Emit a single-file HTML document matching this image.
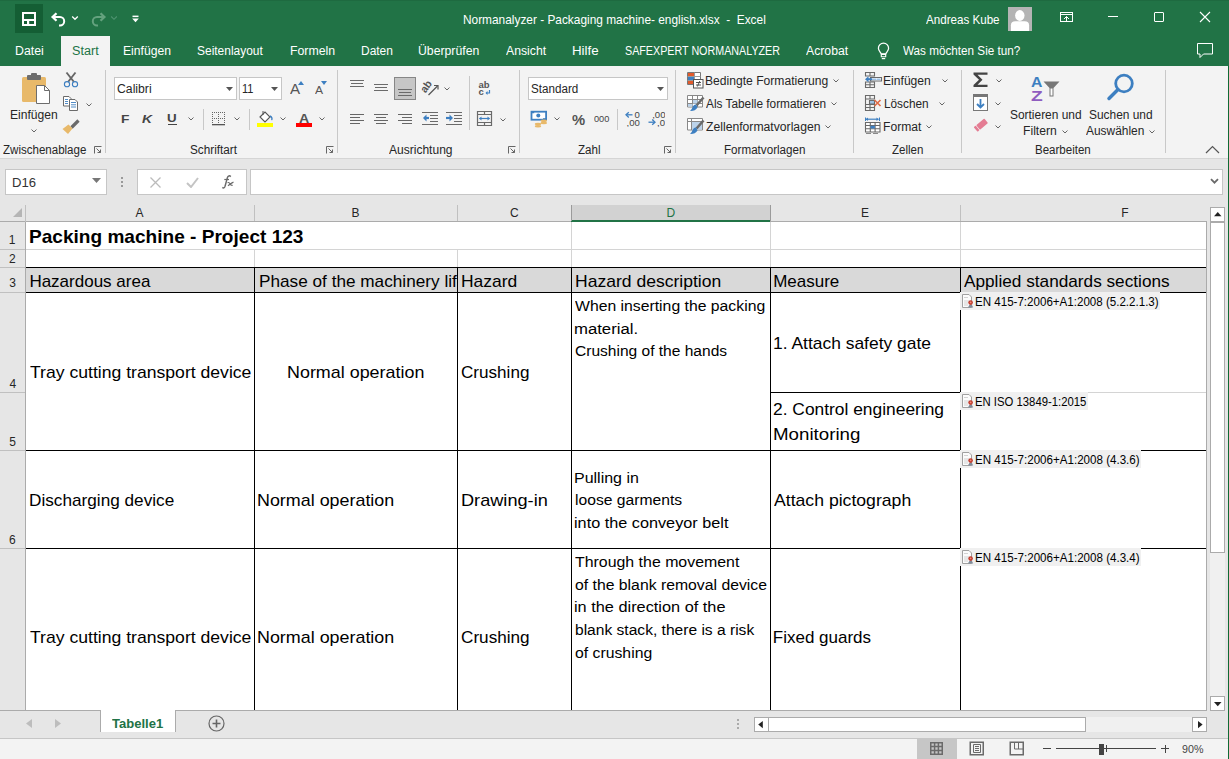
<!DOCTYPE html>
<html><head><meta charset="utf-8">
<style>
*{margin:0;padding:0;box-sizing:border-box}
html,body{width:1229px;height:759px;overflow:hidden;background:#fff;font-family:"Liberation Sans",sans-serif}
.r{position:absolute;display:block}
.t{position:absolute;white-space:nowrap;transform-origin:0 0}
</style></head><body>
<div class="r" style="left:0px;top:0px;width:1229px;height:66px;background:#217346;"></div>
<div class="r" style="left:15px;top:4px;width:28px;height:29px;background:#145e34;"></div>
<svg class="r" style="left:20px;top:10px" width="18" height="18" viewBox="0 0 18 18"><path d="M3 3h12v12H3z" fill="none" stroke="#fff" stroke-width="2"/><rect x="4" y="9" width="10" height="2" fill="#fff"/><rect x="7" y="11" width="2.2" height="3.5" fill="#fff"/></svg>
<svg class="r" style="left:50px;top:10.5px" width="18" height="17" viewBox="0 0 18 17"><path d="M3 6H10A4.2 4.2 0 0 1 10 14.4H9" fill="none" stroke="#fff" stroke-width="2"/><path d="M6.5 2.2L2.6 6l3.9 3.8" fill="none" stroke="#fff" stroke-width="2.3"/></svg>
<svg class="r" style="left:71px;top:15px" width="8" height="6" viewBox="0 0 8 6"><path d="M1.2 1.5L4 4.3 6.8 1.5" fill="none" stroke="#fff" stroke-width="1.3"/></svg>
<svg class="r" style="left:88.5px;top:10.5px" width="18" height="17" viewBox="0 0 18 17"><path d="M15 6H8A4.2 4.2 0 0 0 8 14.4H9" fill="none" stroke="#64a27e" stroke-width="2"/><path d="M11.5 2.2L15.4 6l-3.9 3.8" fill="none" stroke="#64a27e" stroke-width="2.3"/></svg>
<svg class="r" style="left:110px;top:15px" width="8" height="6" viewBox="0 0 8 6"><path d="M1.2 1.5L4 4.3 6.8 1.5" fill="none" stroke="#4f9370" stroke-width="1.1"/></svg>
<svg class="r" style="left:131px;top:14px" width="10" height="10" viewBox="0 0 10 10"><rect x="1.5" y="1.6" width="6" height="1.5" fill="#fff"/><path d="M1.2 4.4h6.6L4.5 8.2z" fill="#fff"/></svg>
<div class="t" style="left:462.5px;top:13.19px;font-size:13.00px;line-height:13.00px;transform:scaleX(0.9130);color:#fff;white-space:pre;">Normanalyzer - Packaging machine- english.xlsx  -  Excel</div>
<div class="t" style="left:926.0px;top:13.19px;font-size:13.00px;line-height:13.00px;transform:scaleX(0.8930);color:#fff;">Andreas Kube</div>
<div class="r" style="left:1008px;top:7px;width:24px;height:24px;background:#b4b4b4;"></div>
<svg class="r" style="left:1008px;top:7px" width="24" height="24" viewBox="0 0 24 24"><ellipse cx="11.8" cy="8.5" rx="4.7" ry="5.4" fill="#fff"/><path d="M2.9 24V18.2Q2.9 14.3 7.4 14.3H16.6Q21.1 14.3 21.1 18.2V24z" fill="#fff"/></svg>
<svg class="r" style="left:1059px;top:12px" width="16" height="13" viewBox="0 0 16 13"><rect x="1.5" y="0.5" width="12" height="9" fill="none" stroke="#fff" stroke-width="1"/><path d="M1.5 2.5h12" stroke="#fff"/><path d="M7.5 9V4.5M5 7L7.5 4.5 10 7" fill="none" stroke="#fff"/></svg>
<div class="r" style="left:1108px;top:16px;width:10px;height:1px;background:#fff;"></div>
<svg class="r" style="left:1153px;top:11px" width="12" height="12" viewBox="0 0 12 12"><rect x="1.5" y="1.5" width="9" height="9" rx="0.5" fill="none" stroke="#fff"/></svg>
<svg class="r" style="left:1199px;top:11px" width="12" height="12" viewBox="0 0 12 12"><path d="M1 1l10 10M11 1L1 11" stroke="#fff" stroke-width="1.1"/></svg>
<div class="r" style="left:61px;top:36px;width:49px;height:30px;background:#f3f3f3;"></div>
<div class="t" style="left:15.0px;top:45.41px;font-size:12.50px;line-height:12.50px;transform:scaleX(0.9872);color:#fff;">Datei</div>
<div class="t" style="left:72.4px;top:45.41px;font-size:12.50px;line-height:12.50px;transform:scaleX(1.0097);color:#217346;">Start</div>
<div class="t" style="left:123.4px;top:45.41px;font-size:12.50px;line-height:12.50px;transform:scaleX(0.9737);color:#fff;">Einfügen</div>
<div class="t" style="left:197.2px;top:45.41px;font-size:12.50px;line-height:12.50px;transform:scaleX(0.9567);color:#fff;">Seitenlayout</div>
<div class="t" style="left:289.5px;top:45.41px;font-size:12.50px;line-height:12.50px;transform:scaleX(0.9852);color:#fff;">Formeln</div>
<div class="t" style="left:360.6px;top:45.41px;font-size:12.50px;line-height:12.50px;transform:scaleX(0.9572);color:#fff;">Daten</div>
<div class="t" style="left:418.3px;top:45.41px;font-size:12.50px;line-height:12.50px;transform:scaleX(0.9803);color:#fff;">Überprüfen</div>
<div class="t" style="left:506.0px;top:45.41px;font-size:12.50px;line-height:12.50px;transform:scaleX(0.9792);color:#fff;">Ansicht</div>
<div class="t" style="left:571.9px;top:45.41px;font-size:12.50px;line-height:12.50px;transform:scaleX(1.0661);color:#fff;">Hilfe</div>
<div class="t" style="left:624.5px;top:45.41px;font-size:12.50px;line-height:12.50px;transform:scaleX(0.8582);color:#fff;">SAFEXPERT NORMANALYZER</div>
<div class="t" style="left:806.0px;top:45.41px;font-size:12.50px;line-height:12.50px;transform:scaleX(0.9779);color:#fff;">Acrobat</div>
<div class="t" style="left:903.2px;top:45.41px;font-size:12.50px;line-height:12.50px;transform:scaleX(0.9359);color:#fff;">Was möchten Sie tun?</div>
<svg class="r" style="left:876px;top:41px" width="16" height="20" viewBox="0 0 16 20"><path d="M5.2 12.8C4.6 11.2 2.4 9.8 2.4 7.2A5.1 5.1 0 0 1 12.6 7.2C12.6 9.8 10.4 11.2 9.8 12.8z" fill="none" stroke="#fff" stroke-width="1.25"/><path d="M5.3 13.4h4.4v2.4h-4.4z" fill="none" stroke="#fff" stroke-width="1.1"/><rect x="5.8" y="17" width="3.4" height="1.2" fill="#fff"/></svg>
<svg class="r" style="left:1196px;top:42px" width="18" height="17" viewBox="0 0 18 17"><path d="M1.5 1.5h15v10.5h-9l-3.5 3.5v-3.5h-2.5z" fill="none" stroke="#fff" stroke-width="1"/></svg>
<div class="r" style="left:1228px;top:66px;width:1px;height:693px;background:#0e6b34;"></div>
<div class="r" style="left:0px;top:0px;width:1229px;height:1px;background:#1e6a40;"></div>
<div class="r" style="left:0px;top:66px;width:1228px;height:92px;background:#f3f3f3;"></div>
<div class="r" style="left:0px;top:158px;width:1228px;height:1px;background:#d5d5d5;"></div>
<svg class="r" style="left:20px;top:72px" width="32" height="33" viewBox="0 0 32 33"><rect x="2" y="5" width="24" height="25" rx="1.5" fill="#e8b96a"/><rect x="7" y="3" width="14" height="5" rx="1" fill="#6d6d6d"/><rect x="11" y="1" width="6" height="4" rx="1" fill="#6d6d6d"/><path d="M16.5 13.5h8l5 5v13h-13z" fill="#fff" stroke="#6d6d6d"/><path d="M24.5 13.5v5h5" fill="none" stroke="#6d6d6d"/></svg>
<div class="t" style="left:9.5px;top:109.11px;font-size:12.50px;line-height:12.50px;transform:scaleX(0.9674);color:#262626;">Einfügen</div>
<svg class="r" style="left:30px;top:128px" width="8" height="5" viewBox="0 0 8 5"><path d="M1.5 1.5l2.5 2.5 2.5-2.5" fill="none" stroke="#666" stroke-width="1"/></svg>
<svg class="r" style="left:62px;top:70px" width="18" height="18" viewBox="0 0 18 18"><path d="M4.5 2.5L12 12M13.5 2.5L6 12" stroke="#666" stroke-width="1.9"/><circle cx="5" cy="14.2" r="2.6" fill="#f3f3f3" stroke="#3d7fc1" stroke-width="1.1"/><circle cx="13" cy="14.2" r="2.6" fill="#f3f3f3" stroke="#3d7fc1" stroke-width="1.1"/></svg>
<svg class="r" style="left:62px;top:95px" width="18" height="16" viewBox="0 0 18 16"><path d="M1.5 1.5h5.5l2 2v7.5h-7.5z" fill="#fff" stroke="#6a6a6a"/><path d="M7.5 4.5h5.5l2.5 2.5v8.5h-8z" fill="#fff" stroke="#6a6a6a"/><path d="M3 4.5h3M3 6.5h3M3 8.5h3M9 7.5h5M9 9.8h5M9 12h5" stroke="#3d7fc1" stroke-width="0.9"/></svg>
<svg class="r" style="left:85px;top:102px" width="8" height="5" viewBox="0 0 8 5"><path d="M1.5 1.5l2.5 2.5 2.5-2.5" fill="none" stroke="#666" stroke-width="1"/></svg>
<svg class="r" style="left:62px;top:117px" width="18" height="17" viewBox="0 0 18 17"><path d="M9.5 10.5L16.5 3.5" stroke="#6a6a6a" stroke-width="3.2"/><path d="M0.5 12l6-4.5 4 4-4.5 5.5z" fill="#e8b96a"/></svg>
<div class="t" style="left:2.6px;top:143.81px;font-size:12.50px;line-height:12.50px;transform:scaleX(0.9228);color:#262626;">Zwischenablage</div>
<svg class="r" style="left:94px;top:146px" width="8" height="8" viewBox="0 0 8 8"><path d="M0.5 7.5V0.5h7" fill="none" stroke="#666"/><path d="M2.5 2.5l4 4M3.5 6.5h3v-3" fill="none" stroke="#666"/></svg>
<div class="r" style="left:105px;top:70px;width:1px;height:83px;background:#c8c8c8;"></div>
<div class="r" style="left:114px;top:77px;width:123px;height:23px;background:#fff;border:1px solid #c6c6c6;"></div>
<div class="t" style="left:117.1px;top:82.81px;font-size:12.50px;line-height:12.50px;transform:scaleX(0.9779);color:#262626;">Calibri</div>
<svg class="r" style="left:226px;top:87px" width="7" height="4" viewBox="0 0 7 4"><path d="M0 0h7L3.5 4z" fill="#555"/></svg>
<div class="r" style="left:239px;top:77px;width:43px;height:23px;background:#fff;border:1px solid #c6c6c6;"></div>
<div class="t" style="left:241.9px;top:82.81px;font-size:12.50px;line-height:12.50px;transform:scaleX(0.8772);color:#262626;">11</div>
<svg class="r" style="left:271px;top:87px" width="7" height="4" viewBox="0 0 7 4"><path d="M0 0h7L3.5 4z" fill="#555"/></svg>
<div class="t" style="left:289.9px;top:81.64px;font-size:14.00px;line-height:14.00px;transform:scaleX(1.0811);color:#555;">A</div>
<svg class="r" style="left:298px;top:81px" width="6" height="4" viewBox="0 0 6 4"><path d="M0 4h6L3 0z" fill="#3d7fc1"/></svg>
<div class="t" style="left:314.9px;top:84.76px;font-size:11.50px;line-height:11.50px;transform:scaleX(1.0526);color:#555;">A</div>
<svg class="r" style="left:321px;top:81px" width="6" height="4" viewBox="0 0 6 4"><path d="M0 0h6L3 4z" fill="#3d7fc1"/></svg>
<div class="t" style="left:121.1px;top:113.86px;font-size:11.50px;line-height:11.50px;font-weight:bold;transform:scaleX(1.1966);color:#444;">F</div>
<div class="t" style="left:142.1px;top:113.86px;font-size:11.50px;line-height:11.50px;font-weight:bold;transform:scaleX(1.2081);color:#444;font-style:italic;">K</div>
<div class="t" style="left:167.2px;top:112.76px;font-size:11.50px;line-height:11.50px;font-weight:bold;transform:scaleX(1.1594);color:#444;">U</div>
<div class="r" style="left:168px;top:124px;width:9px;height:1.3px;background:#444;"></div>
<svg class="r" style="left:187px;top:116px" width="8" height="5" viewBox="0 0 8 5"><path d="M1.5 1.5l2.5 2.5 2.5-2.5" fill="none" stroke="#666" stroke-width="1"/></svg>
<div class="r" style="left:203px;top:109px;width:1px;height:21px;background:#c8c8c8;"></div>
<svg class="r" style="left:211px;top:111px" width="15" height="15" viewBox="0 0 15 15"><rect x="1" y="1" width="1" height="1" fill="#666"/><rect x="1" y="7" width="1" height="1" fill="#666"/><rect x="1" y="1" width="1" height="1" fill="#666"/><rect x="7" y="1" width="1" height="1" fill="#666"/><rect x="13" y="1" width="1" height="1" fill="#666"/><rect x="3" y="1" width="1" height="1" fill="#666"/><rect x="3" y="7" width="1" height="1" fill="#666"/><rect x="1" y="3" width="1" height="1" fill="#666"/><rect x="7" y="3" width="1" height="1" fill="#666"/><rect x="13" y="3" width="1" height="1" fill="#666"/><rect x="5" y="1" width="1" height="1" fill="#666"/><rect x="5" y="7" width="1" height="1" fill="#666"/><rect x="1" y="5" width="1" height="1" fill="#666"/><rect x="7" y="5" width="1" height="1" fill="#666"/><rect x="13" y="5" width="1" height="1" fill="#666"/><rect x="7" y="1" width="1" height="1" fill="#666"/><rect x="7" y="7" width="1" height="1" fill="#666"/><rect x="1" y="7" width="1" height="1" fill="#666"/><rect x="7" y="7" width="1" height="1" fill="#666"/><rect x="13" y="7" width="1" height="1" fill="#666"/><rect x="9" y="1" width="1" height="1" fill="#666"/><rect x="9" y="7" width="1" height="1" fill="#666"/><rect x="1" y="9" width="1" height="1" fill="#666"/><rect x="7" y="9" width="1" height="1" fill="#666"/><rect x="13" y="9" width="1" height="1" fill="#666"/><rect x="11" y="1" width="1" height="1" fill="#666"/><rect x="11" y="7" width="1" height="1" fill="#666"/><rect x="1" y="11" width="1" height="1" fill="#666"/><rect x="7" y="11" width="1" height="1" fill="#666"/><rect x="13" y="11" width="1" height="1" fill="#666"/><rect x="13" y="1" width="1" height="1" fill="#666"/><rect x="13" y="7" width="1" height="1" fill="#666"/><rect x="1" y="13" width="1" height="1" fill="#666"/><rect x="7" y="13" width="1" height="1" fill="#666"/><rect x="13" y="13" width="1" height="1" fill="#666"/><rect x="1" y="13" width="13" height="1.3" fill="#555"/></svg>
<svg class="r" style="left:233px;top:116px" width="8" height="5" viewBox="0 0 8 5"><path d="M1.5 1.5l2.5 2.5 2.5-2.5" fill="none" stroke="#666" stroke-width="1"/></svg>
<div class="r" style="left:249px;top:109px;width:1px;height:21px;background:#c8c8c8;"></div>
<svg class="r" style="left:256px;top:109px" width="18" height="18" viewBox="0 0 18 18"><path d="M4 8l5-5 5 5-5 5z" fill="#fff" stroke="#555" stroke-width="1.1"/><path d="M7 2V6" stroke="#555"/><path d="M14 7c2 1 2.5 3 1.5 4" fill="none" stroke="#3d7fc1" stroke-width="1.4"/></svg>
<div class="r" style="left:257px;top:123px;width:16px;height:4px;background:#ffff00;"></div>
<svg class="r" style="left:279px;top:116px" width="8" height="5" viewBox="0 0 8 5"><path d="M1.5 1.5l2.5 2.5 2.5-2.5" fill="none" stroke="#666" stroke-width="1"/></svg>
<div class="t" style="left:299.3px;top:112.49px;font-size:13.00px;line-height:13.00px;font-weight:bold;transform:scaleX(1.0920);color:#555;">A</div>
<div class="r" style="left:296px;top:123px;width:16px;height:4px;background:#ff0000;"></div>
<svg class="r" style="left:318px;top:116px" width="8" height="5" viewBox="0 0 8 5"><path d="M1.5 1.5l2.5 2.5 2.5-2.5" fill="none" stroke="#666" stroke-width="1"/></svg>
<div class="t" style="left:189.9px;top:143.91px;font-size:12.50px;line-height:12.50px;transform:scaleX(0.9393);color:#262626;">Schriftart</div>
<svg class="r" style="left:326px;top:146px" width="8" height="8" viewBox="0 0 8 8"><path d="M0.5 7.5V0.5h7" fill="none" stroke="#666"/><path d="M2.5 2.5l4 4M3.5 6.5h3v-3" fill="none" stroke="#666"/></svg>
<div class="r" style="left:337px;top:70px;width:1px;height:83px;background:#c8c8c8;"></div>
<div class="r" style="left:350px;top:80px;width:14px;height:1px;background:#6a6a6a;"></div><div class="r" style="left:351px;top:83px;width:12px;height:1px;background:#6a6a6a;"></div><div class="r" style="left:350px;top:86px;width:14px;height:1px;background:#6a6a6a;"></div>
<div class="r" style="left:374px;top:84px;width:14px;height:1px;background:#6a6a6a;"></div><div class="r" style="left:375px;top:87px;width:12px;height:1px;background:#6a6a6a;"></div><div class="r" style="left:374px;top:90px;width:14px;height:1px;background:#6a6a6a;"></div>
<div class="r" style="left:394px;top:77px;width:22px;height:23px;background:#c6c6c6;border:1px solid #868686;"></div>
<div class="r" style="left:398px;top:89px;width:14px;height:1px;background:#6a6a6a;"></div><div class="r" style="left:399px;top:92px;width:12px;height:1px;background:#6a6a6a;"></div><div class="r" style="left:398px;top:95px;width:14px;height:1px;background:#6a6a6a;"></div>
<svg class="r" style="left:420px;top:78px" width="20" height="19" viewBox="0 0 20 19"><text x="0" y="0" font-size="10.5" font-weight="bold" font-family="Liberation Sans" fill="#555" transform="translate(5.5 15.5) rotate(-55)">ab</text><path d="M8.5 17L17.5 8" fill="none" stroke="#555" stroke-width="1.2"/><path d="M14 7.5h4v4" fill="none" stroke="#555" stroke-width="1.2"/></svg>
<svg class="r" style="left:443px;top:86px" width="8" height="5" viewBox="0 0 8 5"><path d="M1.5 1.5l2.5 2.5 2.5-2.5" fill="none" stroke="#666" stroke-width="1"/></svg>
<div class="r" style="left:350px;top:114px;width:14px;height:1px;background:#666;"></div><div class="r" style="left:350px;top:117px;width:10px;height:1px;background:#666;"></div><div class="r" style="left:350px;top:120px;width:14px;height:1px;background:#666;"></div><div class="r" style="left:350px;top:123px;width:10px;height:1px;background:#666;"></div>
<div class="r" style="left:374px;top:114px;width:14px;height:1px;background:#666;"></div><div class="r" style="left:376px;top:117px;width:10px;height:1px;background:#666;"></div><div class="r" style="left:374px;top:120px;width:14px;height:1px;background:#666;"></div><div class="r" style="left:376px;top:123px;width:10px;height:1px;background:#666;"></div>
<div class="r" style="left:398px;top:114px;width:14px;height:1px;background:#666;"></div><div class="r" style="left:402px;top:117px;width:10px;height:1px;background:#666;"></div><div class="r" style="left:398px;top:120px;width:14px;height:1px;background:#666;"></div><div class="r" style="left:402px;top:123px;width:10px;height:1px;background:#666;"></div>
<svg class="r" style="left:422px;top:111px" width="17" height="15" viewBox="0 0 17 15"><path d="M0 1.5h16M8 4.5h8M8 7.5h8M8 10.5h8M0 13.5h16" stroke="#6a6a6a"/><path d="M2 7h5" stroke="#3d7fc1" stroke-width="2.2"/><path d="M4.5 3.5L1 7l3.5 3.5z" fill="#3d7fc1"/></svg>
<svg class="r" style="left:446px;top:111px" width="17" height="15" viewBox="0 0 17 15"><path d="M0 1.5h16M8 4.5h8M8 7.5h8M8 10.5h8M0 13.5h16" stroke="#6a6a6a"/><path d="M0 7h5" stroke="#3d7fc1" stroke-width="2.2"/><path d="M3.5 3.5L7 7l-3.5 3.5z" fill="#3d7fc1"/></svg>
<div class="r" style="left:469px;top:76px;width:1px;height:54px;background:#c8c8c8;"></div>
<svg class="r" style="left:477px;top:80px" width="16" height="16" viewBox="0 0 16 16"><text x="1.5" y="7.8" font-size="9.5" font-weight="bold" font-family="Liberation Sans" fill="#555" transform="scale(1 1)">ab</text><text x="1.5" y="14.9" font-size="9.5" font-weight="bold" font-family="Liberation Sans" fill="#555">c</text><path d="M12.5 10v3H9.5" fill="none" stroke="#3d7fc1" stroke-width="1.2"/><path d="M10.5 11l-2 2 2 2z" fill="#3d7fc1"/></svg>
<svg class="r" style="left:476px;top:110px" width="17" height="17" viewBox="0 0 17 17"><path d="M1.5 1.5h14v14h-14zM1.5 4.5h14M1.5 12.5h14M8.5 1.5v3M8.5 12.5v3" fill="none" stroke="#6a6a6a" stroke-width="1.2"/><path d="M3.5 8.5h10" stroke="#3d7fc1" stroke-width="1.2"/><path d="M5.5 6.5l-2.5 2 2.5 2zM11.5 6.5l2.5 2-2.5 2z" fill="#3d7fc1"/></svg>
<svg class="r" style="left:499px;top:117px" width="8" height="5" viewBox="0 0 8 5"><path d="M1.5 1.5l2.5 2.5 2.5-2.5" fill="none" stroke="#666" stroke-width="1"/></svg>
<div class="t" style="left:389.0px;top:143.71px;font-size:12.50px;line-height:12.50px;transform:scaleX(0.9624);color:#262626;">Ausrichtung</div>
<svg class="r" style="left:508px;top:146px" width="8" height="8" viewBox="0 0 8 8"><path d="M0.5 7.5V0.5h7" fill="none" stroke="#666"/><path d="M2.5 2.5l4 4M3.5 6.5h3v-3" fill="none" stroke="#666"/></svg>
<div class="r" style="left:519px;top:70px;width:1px;height:83px;background:#c8c8c8;"></div>
<div class="r" style="left:528px;top:77px;width:140px;height:23px;background:#fff;border:1px solid #c6c6c6;"></div>
<div class="t" style="left:530.8px;top:83.01px;font-size:12.50px;line-height:12.50px;transform:scaleX(0.9312);color:#262626;">Standard</div>
<svg class="r" style="left:657px;top:87px" width="7" height="4" viewBox="0 0 7 4"><path d="M0 0h7L3.5 4z" fill="#555"/></svg>
<svg class="r" style="left:530px;top:110px" width="19" height="18" viewBox="0 0 19 18"><rect x="1.5" y="1.7" width="14.6" height="8" fill="#fff" stroke="#3d7fc1" stroke-width="1.8"/><circle cx="8.3" cy="5.5" r="2" fill="#3d7fc1"/><path d="M1.2 2.4h3M13 9h3" stroke="#3d7fc1" stroke-width="1.6"/><ellipse cx="13.8" cy="10.8" rx="3.2" ry="1.2" fill="#e8b96a"/><ellipse cx="13.8" cy="13" rx="3.2" ry="1.2" fill="#e8b96a"/><ellipse cx="8" cy="14" rx="3.2" ry="1.2" fill="#e8b96a"/><ellipse cx="8" cy="16.2" rx="3.2" ry="1.2" fill="#e8b96a"/></svg>
<svg class="r" style="left:553px;top:116px" width="8" height="5" viewBox="0 0 8 5"><path d="M1.5 1.5l2.5 2.5 2.5-2.5" fill="none" stroke="#666" stroke-width="1"/></svg>
<div class="t" style="left:572.0px;top:112.94px;font-size:14.00px;line-height:14.00px;font-weight:bold;transform:scaleX(1.0553);color:#555;">%</div>
<div class="t" style="left:594.2px;top:114.10px;font-size:9.80px;line-height:9.80px;transform:scaleX(0.9389);color:#444;">000</div>
<div class="r" style="left:617px;top:109px;width:1px;height:21px;background:#c8c8c8;"></div>
<svg class="r" style="left:624px;top:110px" width="18" height="17" viewBox="0 0 18 17"><text x="10.6" y="8" font-size="9.6" font-family="Liberation Sans" fill="#444">0</text><text x="2.6" y="15.6" font-size="9.6" font-family="Liberation Sans" fill="#444">,00</text><path d="M2.5 4.8h6" stroke="#3d7fc1" stroke-width="1.3"/><path d="M4.8 2.2L2 4.8l2.8 2.6" fill="none" stroke="#3d7fc1" stroke-width="1.3"/></svg>
<svg class="r" style="left:646.5px;top:110px" width="18" height="17" viewBox="0 0 18 17"><text x="5.2" y="8" font-size="9.6" font-family="Liberation Sans" fill="#444">,00</text><text x="10" y="15.6" font-size="9.6" font-family="Liberation Sans" fill="#444">,0</text><path d="M1.5 12.2h6" stroke="#3d7fc1" stroke-width="1.3"/><path d="M5.2 9.6L8 12.2l-2.8 2.6" fill="none" stroke="#3d7fc1" stroke-width="1.3"/></svg>
<div class="t" style="left:577.6px;top:144.21px;font-size:12.50px;line-height:12.50px;transform:scaleX(0.9264);color:#262626;">Zahl</div>
<svg class="r" style="left:664px;top:146px" width="8" height="8" viewBox="0 0 8 8"><path d="M0.5 7.5V0.5h7" fill="none" stroke="#666"/><path d="M2.5 2.5l4 4M3.5 6.5h3v-3" fill="none" stroke="#666"/></svg>
<div class="r" style="left:675px;top:70px;width:1px;height:83px;background:#c8c8c8;"></div>
<svg class="r" style="left:686px;top:71px" width="19" height="19" viewBox="0 0 19 19"><path d="M1.5 1.5h13v12h-13z" fill="#fff" stroke="#777"/><rect x="2" y="2" width="6.5" height="3.5" fill="#e25a2b"/><rect x="2" y="6" width="6.5" height="3.5" fill="#3d7fc1"/><rect x="2" y="10" width="6.5" height="3" fill="#e25a2b"/><path d="M8.5 1.5v12M1.5 5.5h13M1.5 9.5h13" stroke="#999"/><rect x="7.5" y="8.5" width="9.5" height="8.5" fill="#fff" stroke="#555"/><path d="M10 11.5h5M10 14h5M13.8 10l-2.4 5.5" stroke="#444" stroke-width="0.9"/></svg>
<div class="t" style="left:705.1px;top:75.11px;font-size:12.50px;line-height:12.50px;transform:scaleX(0.9685);color:#262626;">Bedingte Formatierung</div>
<svg class="r" style="left:832px;top:78px" width="8" height="5" viewBox="0 0 8 5"><path d="M1.5 1.5l2.5 2.5 2.5-2.5" fill="none" stroke="#666" stroke-width="1"/></svg>
<svg class="r" style="left:686px;top:94px" width="19" height="19" viewBox="0 0 19 19"><path d="M1.5 1.5h15v11.5h-15zM1.5 5.5h15M1.5 9.5h15M6.5 1.5v11.5M11.5 1.5v11.5" fill="#fff" stroke="#888"/><rect x="7" y="6" width="4.5" height="3.5" fill="#bcd3ea"/><rect x="2" y="10" width="4.5" height="2.5" fill="#bcd3ea"/><path d="M17.5 3.5l-7 8" stroke="#6a6a6a" stroke-width="2.6"/><path d="M10.2 10.5c-2.5 0-3.5 2-4.5 4.5-.4.8-1.5 1.7-1.7 2 3 .3 6 -.8 7.5-3.5z" fill="#3d7fc1"/></svg>
<div class="t" style="left:706.1px;top:97.91px;font-size:12.50px;line-height:12.50px;transform:scaleX(0.9464);color:#262626;">Als Tabelle formatieren</div>
<svg class="r" style="left:830px;top:101px" width="8" height="5" viewBox="0 0 8 5"><path d="M1.5 1.5l2.5 2.5 2.5-2.5" fill="none" stroke="#666" stroke-width="1"/></svg>
<svg class="r" style="left:686px;top:117px" width="19" height="19" viewBox="0 0 19 19"><path d="M1.5 1.5h15v11.5h-15zM1.5 4.5h15M5.5 1.5v11.5" fill="#fff" stroke="#888"/><rect x="6" y="5" width="10" height="7.5" fill="#bcd3ea"/><path d="M17.5 3.5l-7 8" stroke="#6a6a6a" stroke-width="2.6"/><path d="M10.2 10.5c-2.5 0-3.5 2-4.5 4.5-.4.8-1.5 1.7-1.7 2 3 .3 6 -.8 7.5-3.5z" fill="#3d7fc1"/></svg>
<div class="t" style="left:705.7px;top:120.71px;font-size:12.50px;line-height:12.50px;transform:scaleX(0.9750);color:#262626;">Zellenformatvorlagen</div>
<svg class="r" style="left:824px;top:124px" width="8" height="5" viewBox="0 0 8 5"><path d="M1.5 1.5l2.5 2.5 2.5-2.5" fill="none" stroke="#666" stroke-width="1"/></svg>
<div class="t" style="left:723.6px;top:143.91px;font-size:12.50px;line-height:12.50px;transform:scaleX(0.9306);color:#262626;">Formatvorlagen</div>
<div class="r" style="left:853px;top:70px;width:1px;height:83px;background:#c8c8c8;"></div>
<svg class="r" style="left:864px;top:71px" width="19" height="18" viewBox="0 0 19 18"><path d="M1.5 1.5h9v3.5h-9zM6 1.5v3.5M1.5 11h9v5.5h-9zM1.5 13.75h9M6 11v5.5" fill="none" stroke="#6a6a6a" stroke-width="1.1"/><path d="M6.5 6.5h11v3.5h-11z" fill="#fff" stroke="#6a6a6a" stroke-width="1.1"/><rect x="8" y="7.5" width="4" height="1.6" fill="#9ec2e6"/><rect x="12.5" y="7.5" width="4" height="1.6" fill="#9ec2e6"/><path d="M3 8.2h5" stroke="#3d7fc1" stroke-width="2"/><path d="M4.5 5.2L1 8.2l3.5 3z" fill="#3d7fc1"/></svg>
<div class="t" style="left:883.4px;top:75.11px;font-size:12.50px;line-height:12.50px;transform:scaleX(0.9695);color:#262626;">Einfügen</div>
<svg class="r" style="left:941px;top:78px" width="8" height="5" viewBox="0 0 8 5"><path d="M1.5 1.5l2.5 2.5 2.5-2.5" fill="none" stroke="#666" stroke-width="1"/></svg>
<svg class="r" style="left:864px;top:94px" width="19" height="18" viewBox="0 0 19 18"><path d="M1.5 1.5h9v3.5h-9zM6 1.5v3.5M1.5 10.5h9v6h-9zM1.5 13.5h9M6 10.5v6M1.5 5v5.5" fill="none" stroke="#6a6a6a" stroke-width="1.1"/><path d="M5.5 6.5h5v3.5h-5z" fill="#9ec2e6" stroke="#6a6a6a" stroke-width="1.1"/><path d="M10.5 6l6 6M16.5 6l-6 6" stroke="#e06a45" stroke-width="1.6"/></svg>
<div class="t" style="left:883.5px;top:98.11px;font-size:12.50px;line-height:12.50px;transform:scaleX(0.9439);color:#262626;">Löschen</div>
<svg class="r" style="left:938px;top:101px" width="8" height="5" viewBox="0 0 8 5"><path d="M1.5 1.5l2.5 2.5 2.5-2.5" fill="none" stroke="#666" stroke-width="1"/></svg>
<svg class="r" style="left:864px;top:117px" width="19" height="18" viewBox="0 0 19 18"><path d="M2 2.2h12.5" stroke="#3d7fc1" stroke-width="1.2"/><path d="M1.5 0.5v3.5M15.5 0.5v3.5" stroke="#3d7fc1"/><path d="M4 0.5L1.8 2.2 4 4zM12.5 0.5l2.2 1.7-2.2 1.8z" fill="#3d7fc1"/><path d="M1.5 5.5h14.5v9.5h-14.5zM1.5 8.5h14.5M1.5 11.7h14.5M6.3 5.5v9.5M11.1 5.5v9.5" fill="#fff" stroke="#6a6a6a" stroke-width="1.1"/><rect x="6.5" y="8.8" width="4.4" height="2.7" fill="#3d7fc1"/><path d="M2 16.5h5M9 16.5h5" stroke="#888"/></svg>
<div class="t" style="left:883.4px;top:120.81px;font-size:12.50px;line-height:12.50px;transform:scaleX(0.9688);color:#262626;">Format</div>
<svg class="r" style="left:925px;top:124px" width="8" height="5" viewBox="0 0 8 5"><path d="M1.5 1.5l2.5 2.5 2.5-2.5" fill="none" stroke="#666" stroke-width="1"/></svg>
<div class="t" style="left:891.8px;top:144.01px;font-size:12.50px;line-height:12.50px;transform:scaleX(0.9224);color:#262626;">Zellen</div>
<div class="r" style="left:961px;top:70px;width:1px;height:83px;background:#c8c8c8;"></div>
<svg class="r" style="left:972px;top:71px" width="17" height="17" viewBox="0 0 17 17"><path d="M1.5 1.5h14v2.2H5.5l5 5-5 5h10v2.3h-14v-2l5.5-5.3L1.5 3.5z" fill="#444"/></svg>
<svg class="r" style="left:995px;top:78px" width="8" height="5" viewBox="0 0 8 5"><path d="M1.5 1.5l2.5 2.5 2.5-2.5" fill="none" stroke="#666" stroke-width="1"/></svg>
<svg class="r" style="left:973px;top:94px" width="16" height="18" viewBox="0 0 16 18"><rect x="0.5" y="0.5" width="14" height="16" fill="#fff" stroke="#777"/><rect x="0.5" y="0.5" width="14" height="2.5" fill="#777"/><path d="M7.5 5v8M4 10l3.5 3.5L11 10" fill="none" stroke="#3d7fc1" stroke-width="1.8"/></svg>
<svg class="r" style="left:994px;top:101px" width="8" height="5" viewBox="0 0 8 5"><path d="M1.5 1.5l2.5 2.5 2.5-2.5" fill="none" stroke="#666" stroke-width="1"/></svg>
<svg class="r" style="left:973px;top:117px" width="16" height="16" viewBox="0 0 16 16"><g transform="rotate(-40 8 8)"><rect x="4.2" y="5" width="10.5" height="6" rx="0.8" fill="#e47c93"/><rect x="1" y="5" width="2.5" height="6" rx="0.6" fill="#e47c93"/></g></svg>
<svg class="r" style="left:994px;top:124px" width="8" height="5" viewBox="0 0 8 5"><path d="M1.5 1.5l2.5 2.5 2.5-2.5" fill="none" stroke="#666" stroke-width="1"/></svg>
<div class="t" style="left:1030.9px;top:74.64px;font-size:14.00px;line-height:14.00px;font-weight:bold;transform:scaleX(1.1277);color:#3d7fc1;">A</div>
<div class="t" style="left:1030.8px;top:88.64px;font-size:14.00px;line-height:14.00px;font-weight:bold;transform:scaleX(1.3677);color:#8f5cbf;">Z</div>
<svg class="r" style="left:1043px;top:81px" width="17" height="16" viewBox="0 0 17 16"><path d="M0.5 0.5h16l-6 6.5v8.5h-4v-8.5z" fill="#777"/><path d="M7.5 7.5v7h2v-7z" fill="#fff"/></svg>
<svg class="r" style="left:1106px;top:73px" width="29" height="29" viewBox="0 0 29 29"><circle cx="18" cy="10.5" r="8.3" fill="none" stroke="#3d7fc1" stroke-width="2.8"/><path d="M12 16.5L3 25.5" stroke="#3d7fc1" stroke-width="3.5" stroke-linecap="round"/></svg>
<div class="t" style="left:1009.7px;top:109.11px;font-size:12.50px;line-height:12.50px;transform:scaleX(0.9539);color:#262626;">Sortieren und</div>
<div class="t" style="left:1023.2px;top:125.41px;font-size:12.50px;line-height:12.50px;transform:scaleX(0.9742);color:#262626;">Filtern</div>
<svg class="r" style="left:1061px;top:129px" width="8" height="5" viewBox="0 0 8 5"><path d="M1.5 1.5l2.5 2.5 2.5-2.5" fill="none" stroke="#666" stroke-width="1"/></svg>
<div class="t" style="left:1088.5px;top:109.11px;font-size:12.50px;line-height:12.50px;transform:scaleX(0.9533);color:#262626;">Suchen und</div>
<div class="t" style="left:1086.0px;top:125.41px;font-size:12.50px;line-height:12.50px;transform:scaleX(0.9536);color:#262626;">Auswählen</div>
<svg class="r" style="left:1148px;top:129px" width="8" height="5" viewBox="0 0 8 5"><path d="M1.5 1.5l2.5 2.5 2.5-2.5" fill="none" stroke="#666" stroke-width="1"/></svg>
<div class="t" style="left:1035.4px;top:144.01px;font-size:12.50px;line-height:12.50px;transform:scaleX(0.9224);color:#262626;">Bearbeiten</div>
<div class="r" style="left:1165px;top:70px;width:1px;height:83px;background:#c8c8c8;"></div>
<svg class="r" style="left:1205px;top:145px" width="15" height="9" viewBox="0 0 15 9"><path d="M1 8l6.5-6.5L14 8" fill="none" stroke="#555" stroke-width="1.2"/></svg>
<div class="r" style="left:0px;top:159px;width:1228px;height:46px;background:#e6e6e6;"></div>
<div class="r" style="left:5px;top:169px;width:102px;height:26px;background:#fff;border:1px solid #c6c6c6;"></div>
<div class="t" style="left:11.5px;top:177.21px;font-size:12.50px;line-height:12.50px;transform:scaleX(1.0467);color:#333;">D16</div>
<svg class="r" style="left:92px;top:178px" width="9" height="5" viewBox="0 0 9 5"><path d="M0 0h9L4.5 5z" fill="#777"/></svg>
<div class="r" style="left:121px;top:177px;width:2px;height:2px;background:#999;"></div><div class="r" style="left:121px;top:181px;width:2px;height:2px;background:#999;"></div><div class="r" style="left:121px;top:185px;width:2px;height:2px;background:#999;"></div>
<div class="r" style="left:137px;top:169px;width:110px;height:26px;background:#fff;border:1px solid #c6c6c6;"></div>
<svg class="r" style="left:150px;top:177px" width="11" height="11" viewBox="0 0 11 11"><path d="M0.5 0.5l10 10M10.5 0.5l-10 10" stroke="#bbb" stroke-width="1.3"/></svg>
<svg class="r" style="left:186px;top:177px" width="13" height="11" viewBox="0 0 13 11"><path d="M1 6l4 4 7-9" fill="none" stroke="#c4c4c4" stroke-width="2"/></svg>
<svg class="r" style="left:215px;top:172px" width="25" height="20" viewBox="0 0 25 20"><path d="M15.8 4.6C14.6 3.4 13 3.6 12.4 5.6L10 14.4C9.5 16 8.4 16.3 7.4 15.4" fill="none" stroke="#6a6a6a" stroke-width="1.5"/><path d="M9.3 7.5h4.7" stroke="#6a6a6a" stroke-width="1.2"/><path d="M12.6 10.6c1.5-.4 2 .2 2.4 1.2.5 1.2 1 1.8 2.6 1.6M18.5 10.2c-1.5.4-3.5 2-5.5 3.5" fill="none" stroke="#6a6a6a" stroke-width="1.2"/></svg>
<div class="r" style="left:250px;top:169px;width:973px;height:26px;background:#fff;border:1px solid #c6c6c6;"></div>
<svg class="r" style="left:1210px;top:178px" width="10" height="7" viewBox="0 0 10 7"><path d="M1 1.2l3.5 3.5 3.5-3.5" fill="none" stroke="#6a6a6a" stroke-width="1.8"/></svg>
<div class="r" style="left:0px;top:205px;width:1207px;height:17px;background:#e6e6e6;"></div>
<div class="r" style="left:0px;top:221px;width:1207px;height:1px;background:#ababab;"></div>
<div class="r" style="left:25px;top:205px;width:1px;height:17px;background:#c0c0c0;"></div>
<svg class="r" style="left:13px;top:208px" width="10" height="10" viewBox="0 0 10 10"><path d="M9 0v9H0z" fill="#b5b5b5"/></svg>
<div class="r" style="left:571px;top:205px;width:199px;height:16px;background:#d2d2d2;"></div>
<div class="r" style="left:571px;top:220px;width:199px;height:2px;background:#217346;"></div>
<div class="t" style="left:135.5px;top:206.84px;font-size:12.00px;line-height:12.00px;color:#262626;width:8px;text-align:center;">A</div>
<div class="r" style="left:254px;top:205px;width:1px;height:16px;background:#c0c0c0;"></div>
<div class="t" style="left:351.5px;top:206.84px;font-size:12.00px;line-height:12.00px;color:#262626;width:8px;text-align:center;">B</div>
<div class="r" style="left:457px;top:205px;width:1px;height:16px;background:#c0c0c0;"></div>
<div class="t" style="left:510.0px;top:206.84px;font-size:12.00px;line-height:12.00px;color:#262626;width:8px;text-align:center;">C</div>
<div class="r" style="left:571px;top:205px;width:1px;height:16px;background:#9b9b9b;"></div>
<div class="t" style="left:666.5px;top:206.84px;font-size:12.00px;line-height:12.00px;color:#217346;width:8px;text-align:center;">D</div>
<div class="r" style="left:770px;top:205px;width:1px;height:16px;background:#9b9b9b;"></div>
<div class="t" style="left:861.0px;top:206.84px;font-size:12.00px;line-height:12.00px;color:#262626;width:8px;text-align:center;">E</div>
<div class="r" style="left:960px;top:205px;width:1px;height:16px;background:#c0c0c0;"></div>
<div class="t" style="left:1121.0px;top:206.84px;font-size:12.00px;line-height:12.00px;color:#262626;width:8px;text-align:center;">F</div>
<div class="r" style="left:1207px;top:205px;width:21px;height:506px;background:#e6e6e6;"></div>
<div class="r" style="left:1210px;top:207px;width:15px;height:15px;background:#fff;border:1px solid #ababab;"></div>
<svg class="r" style="left:1214px;top:212px" width="8" height="5" viewBox="0 0 8 5"><path d="M0 4.2h7.5L3.75 0z" fill="#222"/></svg>
<div class="r" style="left:1210px;top:222px;width:15px;height:488px;background:#f0f0f0;"></div>
<div class="r" style="left:1210px;top:222px;width:15px;height:331px;background:#fff;border:1px solid #ababab;"></div>
<div class="r" style="left:1210px;top:696px;width:15px;height:15px;background:#fff;border:1px solid #ababab;"></div>
<svg class="r" style="left:1214px;top:702px" width="8" height="5" viewBox="0 0 8 5"><path d="M0 0h7.5L3.75 4.2z" fill="#222"/></svg>
<div class="r" style="left:0px;top:222px;width:25px;height:489px;background:#e6e6e6;"></div>
<div class="r" style="left:25px;top:222px;width:1px;height:489px;background:#ababab;"></div>
<div class="r" style="left:26px;top:222px;width:1181px;height:489px;background:#fff;"></div>
<div class="r" style="left:1206px;top:222px;width:1px;height:489px;background:#ababab;"></div>
<div class="r" style="left:0px;top:249px;width:25px;height:1px;background:#c0c0c0;"></div>
<div class="r" style="left:0px;top:267px;width:25px;height:1px;background:#c0c0c0;"></div>
<div class="r" style="left:0px;top:292px;width:25px;height:1px;background:#c0c0c0;"></div>
<div class="r" style="left:0px;top:392px;width:25px;height:1px;background:#c0c0c0;"></div>
<div class="r" style="left:0px;top:450px;width:25px;height:1px;background:#c0c0c0;"></div>
<div class="r" style="left:0px;top:548px;width:25px;height:1px;background:#c0c0c0;"></div>
<div class="t" style="left:8.8px;top:233.84px;font-size:12.00px;line-height:12.00px;color:#262626;">1</div>
<div class="t" style="left:9.1px;top:252.84px;font-size:12.00px;line-height:12.00px;color:#262626;">2</div>
<div class="t" style="left:9.2px;top:276.84px;font-size:12.00px;line-height:12.00px;color:#262626;">3</div>
<div class="t" style="left:9.4px;top:377.84px;font-size:12.00px;line-height:12.00px;color:#262626;">4</div>
<div class="t" style="left:9.2px;top:435.84px;font-size:12.00px;line-height:12.00px;color:#262626;">5</div>
<div class="t" style="left:9.1px;top:533.84px;font-size:12.00px;line-height:12.00px;color:#262626;">6</div>
<div class="r" style="left:26px;top:249px;width:1180px;height:1px;background:#d4d4d4;"></div>
<div class="r" style="left:571px;top:222px;width:1px;height:45px;background:#d4d4d4;"></div>
<div class="r" style="left:770px;top:222px;width:1px;height:45px;background:#d4d4d4;"></div>
<div class="r" style="left:960px;top:222px;width:1px;height:45px;background:#d4d4d4;"></div>
<div class="r" style="left:254px;top:250px;width:1px;height:17px;background:#d4d4d4;"></div>
<div class="r" style="left:457px;top:250px;width:1px;height:17px;background:#d4d4d4;"></div>
<div class="r" style="left:26px;top:268px;width:1180px;height:24px;background:#d9d9d9;"></div>
<div class="r" style="left:26px;top:267px;width:1180px;height:1px;background:#000;"></div>
<div class="r" style="left:26px;top:292px;width:1180px;height:1px;background:#000;"></div>
<div class="r" style="left:26px;top:450px;width:1180px;height:1px;background:#000;"></div>
<div class="r" style="left:26px;top:548px;width:1180px;height:1px;background:#000;"></div>
<div class="r" style="left:770px;top:392px;width:190px;height:1px;background:#000;"></div>
<div class="r" style="left:960px;top:392px;width:246px;height:1px;background:#d4d4d4;"></div>
<div class="r" style="left:254px;top:267px;width:1px;height:444px;background:#000;"></div>
<div class="r" style="left:457px;top:267px;width:1px;height:444px;background:#000;"></div>
<div class="r" style="left:571px;top:267px;width:1px;height:444px;background:#000;"></div>
<div class="r" style="left:770px;top:267px;width:1px;height:444px;background:#000;"></div>
<div class="r" style="left:960px;top:267px;width:1px;height:444px;background:#000;"></div>
<div class="t" style="left:28.7px;top:228.33px;font-size:18.50px;line-height:18.50px;font-weight:bold;transform:scaleX(1.0306);color:#000;">Packing machine - Project 123</div>
<div class="t" style="left:29.4px;top:272.60px;font-size:17.00px;line-height:17.00px;color:#000;">Hazardous area</div>
<div class="r" style="left:255px;top:268px;width:202px;height:24px;overflow:hidden"><div class="t" style="left:3.6px;top:4.60px;font-size:17.00px;line-height:17.00px;transform:scaleX(1.0112);color:#000;">Phase of the machinery life</div></div>
<div class="t" style="left:460.9px;top:272.60px;font-size:17.00px;line-height:17.00px;transform:scaleX(1.0268);color:#000;">Hazard</div>
<div class="t" style="left:574.6px;top:272.60px;font-size:17.00px;line-height:17.00px;transform:scaleX(1.0312);color:#000;">Hazard description</div>
<div class="t" style="left:773.2px;top:272.60px;font-size:17.00px;line-height:17.00px;color:#000;">Measure</div>
<div class="t" style="left:964.4px;top:272.60px;font-size:17.00px;line-height:17.00px;transform:scaleX(1.0121);color:#000;">Applied standards sections</div>
<div class="t" style="left:29.6px;top:363.60px;font-size:17.00px;line-height:17.00px;transform:scaleX(1.0353);color:#000;">Tray cutting transport device</div>
<div class="t" style="left:287.1px;top:363.60px;font-size:17.00px;line-height:17.00px;transform:scaleX(1.0532);color:#000;">Normal operation</div>
<div class="t" style="left:461.4px;top:363.60px;font-size:17.00px;line-height:17.00px;transform:scaleX(1.0061);color:#000;">Crushing</div>
<div class="t" style="left:575.4px;top:297.93px;font-size:15.20px;line-height:15.20px;transform:scaleX(1.0381);color:#000;">When inserting the packing</div>
<div class="t" style="left:574.4px;top:320.73px;font-size:15.20px;line-height:15.20px;transform:scaleX(1.1002);color:#000;">material.</div>
<div class="t" style="left:574.7px;top:342.93px;font-size:15.20px;line-height:15.20px;transform:scaleX(1.0234);color:#000;">Crushing of the hands</div>
<div class="t" style="left:772.9px;top:334.70px;font-size:17.00px;line-height:17.00px;transform:scaleX(1.0257);color:#000;">1. Attach safety gate</div>
<div class="t" style="left:773.3px;top:401.10px;font-size:17.00px;line-height:17.00px;transform:scaleX(1.0224);color:#000;">2. Control engineering</div>
<div class="t" style="left:772.7px;top:425.50px;font-size:17.00px;line-height:17.00px;transform:scaleX(1.1008);color:#000;">Monitoring</div>
<div class="t" style="left:29.2px;top:491.60px;font-size:17.00px;line-height:17.00px;transform:scaleX(1.0110);color:#000;">Discharging device</div>
<div class="t" style="left:257.1px;top:491.60px;font-size:17.00px;line-height:17.00px;transform:scaleX(1.0524);color:#000;">Normal operation</div>
<div class="t" style="left:460.8px;top:491.60px;font-size:17.00px;line-height:17.00px;transform:scaleX(1.0679);color:#000;">Drawing-in</div>
<div class="t" style="left:574.2px;top:469.53px;font-size:15.20px;line-height:15.20px;transform:scaleX(1.0530);color:#000;">Pulling in</div>
<div class="t" style="left:574.5px;top:492.43px;font-size:15.20px;line-height:15.20px;transform:scaleX(1.0312);color:#000;">loose garments</div>
<div class="t" style="left:574.4px;top:515.23px;font-size:15.20px;line-height:15.20px;transform:scaleX(1.0694);color:#000;">into the conveyor belt</div>
<div class="t" style="left:774.1px;top:491.60px;font-size:17.00px;line-height:17.00px;transform:scaleX(1.0370);color:#000;">Attach pictograph</div>
<div class="t" style="left:29.6px;top:629.10px;font-size:17.00px;line-height:17.00px;transform:scaleX(1.0353);color:#000;">Tray cutting transport device</div>
<div class="t" style="left:257.1px;top:629.10px;font-size:17.00px;line-height:17.00px;transform:scaleX(1.0524);color:#000;">Normal operation</div>
<div class="t" style="left:461.4px;top:629.10px;font-size:17.00px;line-height:17.00px;transform:scaleX(1.0091);color:#000;">Crushing</div>
<div class="t" style="left:575.1px;top:554.13px;font-size:15.20px;line-height:15.20px;transform:scaleX(1.0466);color:#000;">Through the movement</div>
<div class="t" style="left:574.8px;top:576.73px;font-size:15.20px;line-height:15.20px;transform:scaleX(1.0384);color:#000;">of the blank removal device</div>
<div class="t" style="left:574.4px;top:599.43px;font-size:15.20px;line-height:15.20px;transform:scaleX(1.0742);color:#000;">in the direction of the</div>
<div class="t" style="left:574.5px;top:622.13px;font-size:15.20px;line-height:15.20px;transform:scaleX(1.0256);color:#000;">blank stack, there is a risk</div>
<div class="t" style="left:574.8px;top:644.93px;font-size:15.20px;line-height:15.20px;transform:scaleX(1.0392);color:#000;">of crushing</div>
<div class="t" style="left:772.8px;top:629.10px;font-size:17.00px;line-height:17.00px;color:#000;">Fixed guards</div>
<div class="r" style="left:960px;top:292px;width:200px;height:18px;background:#f0f0f0;"></div><svg class="r" style="left:961px;top:293px" width="14" height="16" viewBox="0 0 14 16"><path d="M1.5 1.5h6.5l2.5 2.5v10.5h-9z" fill="#fbfbfb" stroke="#a0a0a0"/><path d="M3 4.5h4M3 8h5M3 10h4M3 12h4" stroke="#c8c8c8" stroke-width="0.8"/><circle cx="9.6" cy="9.6" r="2.3" fill="#c0392b"/><circle cx="9.6" cy="9.4" r="0.9" fill="#f08a7a"/><path d="M7 14.5l1.3-2.5h2.6l1.3 2.5z" fill="#7f8c9a"/></svg><div class="t" style="left:975.1px;top:296.31px;font-size:12.50px;line-height:12.50px;transform:scaleX(0.9255);color:#000;">EN 415-7:2006+A1:2008 (5.2.2.1.3)</div>
<div class="r" style="left:960px;top:392px;width:128px;height:18px;background:#f0f0f0;"></div><svg class="r" style="left:961px;top:393px" width="14" height="16" viewBox="0 0 14 16"><path d="M1.5 1.5h6.5l2.5 2.5v10.5h-9z" fill="#fbfbfb" stroke="#a0a0a0"/><path d="M3 4.5h4M3 8h5M3 10h4M3 12h4" stroke="#c8c8c8" stroke-width="0.8"/><circle cx="9.6" cy="9.6" r="2.3" fill="#c0392b"/><circle cx="9.6" cy="9.4" r="0.9" fill="#f08a7a"/><path d="M7 14.5l1.3-2.5h2.6l1.3 2.5z" fill="#7f8c9a"/></svg><div class="t" style="left:975.1px;top:396.31px;font-size:12.50px;line-height:12.50px;transform:scaleX(0.9053);color:#000;">EN ISO 13849-1:2015</div>
<div class="r" style="left:960px;top:450px;width:181px;height:18px;background:#f0f0f0;"></div><svg class="r" style="left:961px;top:451px" width="14" height="16" viewBox="0 0 14 16"><path d="M1.5 1.5h6.5l2.5 2.5v10.5h-9z" fill="#fbfbfb" stroke="#a0a0a0"/><path d="M3 4.5h4M3 8h5M3 10h4M3 12h4" stroke="#c8c8c8" stroke-width="0.8"/><circle cx="9.6" cy="9.6" r="2.3" fill="#c0392b"/><circle cx="9.6" cy="9.4" r="0.9" fill="#f08a7a"/><path d="M7 14.5l1.3-2.5h2.6l1.3 2.5z" fill="#7f8c9a"/></svg><div class="t" style="left:975.1px;top:454.31px;font-size:12.50px;line-height:12.50px;transform:scaleX(0.9272);color:#000;">EN 415-7:2006+A1:2008 (4.3.6)</div>
<div class="r" style="left:960px;top:548px;width:181px;height:18px;background:#f0f0f0;"></div><svg class="r" style="left:961px;top:549px" width="14" height="16" viewBox="0 0 14 16"><path d="M1.5 1.5h6.5l2.5 2.5v10.5h-9z" fill="#fbfbfb" stroke="#a0a0a0"/><path d="M3 4.5h4M3 8h5M3 10h4M3 12h4" stroke="#c8c8c8" stroke-width="0.8"/><circle cx="9.6" cy="9.6" r="2.3" fill="#c0392b"/><circle cx="9.6" cy="9.4" r="0.9" fill="#f08a7a"/><path d="M7 14.5l1.3-2.5h2.6l1.3 2.5z" fill="#7f8c9a"/></svg><div class="t" style="left:975.1px;top:552.31px;font-size:12.50px;line-height:12.50px;transform:scaleX(0.9272);color:#000;">EN 415-7:2006+A1:2008 (4.3.4)</div>
<div class="r" style="left:0px;top:710px;width:1207px;height:1px;background:#ababab;"></div>
<div class="r" style="left:0px;top:711px;width:1228px;height:27px;background:#e6e6e6;"></div>
<div class="r" style="left:0px;top:738px;width:1228px;height:1px;background:#c6c6c6;"></div>
<svg class="r" style="left:26px;top:719px" width="6" height="9" viewBox="0 0 6 9"><path d="M6 0v9L0 4.5z" fill="#bdbdbd"/></svg>
<svg class="r" style="left:55px;top:719px" width="6" height="9" viewBox="0 0 6 9"><path d="M0 0v9l6-4.5z" fill="#bdbdbd"/></svg>
<div class="r" style="left:100px;top:710px;width:76px;height:22px;background:#fff;border-left:1px solid #ababab;border-right:1px solid #ababab;"></div>
<div class="t" style="left:112.1px;top:718.11px;font-size:12.50px;line-height:12.50px;font-weight:bold;transform:scaleX(1.0432);color:#217346;">Tabelle1</div>
<svg class="r" style="left:208px;top:715px" width="17" height="17" viewBox="0 0 17 17"><circle cx="8.5" cy="8.5" r="7.5" fill="none" stroke="#666" stroke-width="1.2"/><path d="M8.5 4.5v8M4.5 8.5h8" stroke="#666" stroke-width="1.6"/></svg>
<div class="r" style="left:737px;top:719px;width:2px;height:2px;background:#aaa;"></div><div class="r" style="left:737px;top:723px;width:2px;height:2px;background:#aaa;"></div><div class="r" style="left:737px;top:727px;width:2px;height:2px;background:#aaa;"></div>
<div class="r" style="left:754px;top:717px;width:453px;height:15px;background:#f0f0f0;"></div>
<div class="r" style="left:754px;top:717px;width:15px;height:15px;background:#fff;border:1px solid #ababab;"></div>
<svg class="r" style="left:758px;top:721px" width="6" height="8" viewBox="0 0 6 8"><path d="M4.8 0v7.2L0.2 3.6z" fill="#222"/></svg>
<div class="r" style="left:768px;top:717px;width:318px;height:15px;background:#fff;border:1px solid #ababab;"></div>
<div class="r" style="left:1192px;top:717px;width:15px;height:15px;background:#fff;border:1px solid #ababab;"></div>
<svg class="r" style="left:1198px;top:721px" width="6" height="8" viewBox="0 0 6 8"><path d="M0 0v7.2l4.6-3.6z" fill="#222"/></svg>
<div class="r" style="left:0px;top:739px;width:1228px;height:20px;background:#f3f3f3;"></div>
<div class="r" style="left:917px;top:739px;width:40px;height:20px;background:#c6c6c6;"></div>
<svg class="r" style="left:929px;top:741px" width="16" height="16" viewBox="0 0 16 16"><path d="M1.75 1.75h11.5v11.5H1.75zM1.75 5.6h11.5M1.75 9.4h11.5M5.6 1.75v11.5M9.4 1.75v11.5" fill="none" stroke="#6a6a6a" stroke-width="1.5"/></svg>
<svg class="r" style="left:969px;top:741px" width="16" height="16" viewBox="0 0 16 16"><path d="M1.25 1.25h13v12.5h-13z" fill="none" stroke="#6a6a6a" stroke-width="1.5"/><path d="M4.5 3.5h7v8h-7z" fill="none" stroke="#6a6a6a"/><path d="M6 5.5h4M6 7.5h4M6 9.5h4" stroke="#6a6a6a"/></svg>
<svg class="r" style="left:1009px;top:741px" width="16" height="16" viewBox="0 0 16 16"><path d="M1.25 1.25h13v12.5h-13z" fill="none" stroke="#6a6a6a" stroke-width="1.5"/><path d="M5.5 1.5v6.5M9.5 1.5v6.5M5.5 8h8.5" fill="none" stroke="#6a6a6a"/></svg>
<div class="r" style="left:1043px;top:748px;width:8px;height:1px;background:#444;"></div>
<div class="r" style="left:1056px;top:748px;width:100px;height:1px;background:#444;"></div>
<div class="r" style="left:1099px;top:744px;width:5px;height:11px;background:#444;"></div>
<div class="r" style="left:1106px;top:745px;width:1px;height:7px;background:#444;"></div>
<div class="r" style="left:1161px;top:748px;width:8px;height:1px;background:#444;"></div><div class="r" style="left:1164.5px;top:744.5px;width:1px;height:8px;background:#444;"></div>
<div class="t" style="left:1181.8px;top:744.26px;font-size:11.50px;line-height:11.50px;transform:scaleX(0.9297);color:#444;">90%</div>
</body></html>
